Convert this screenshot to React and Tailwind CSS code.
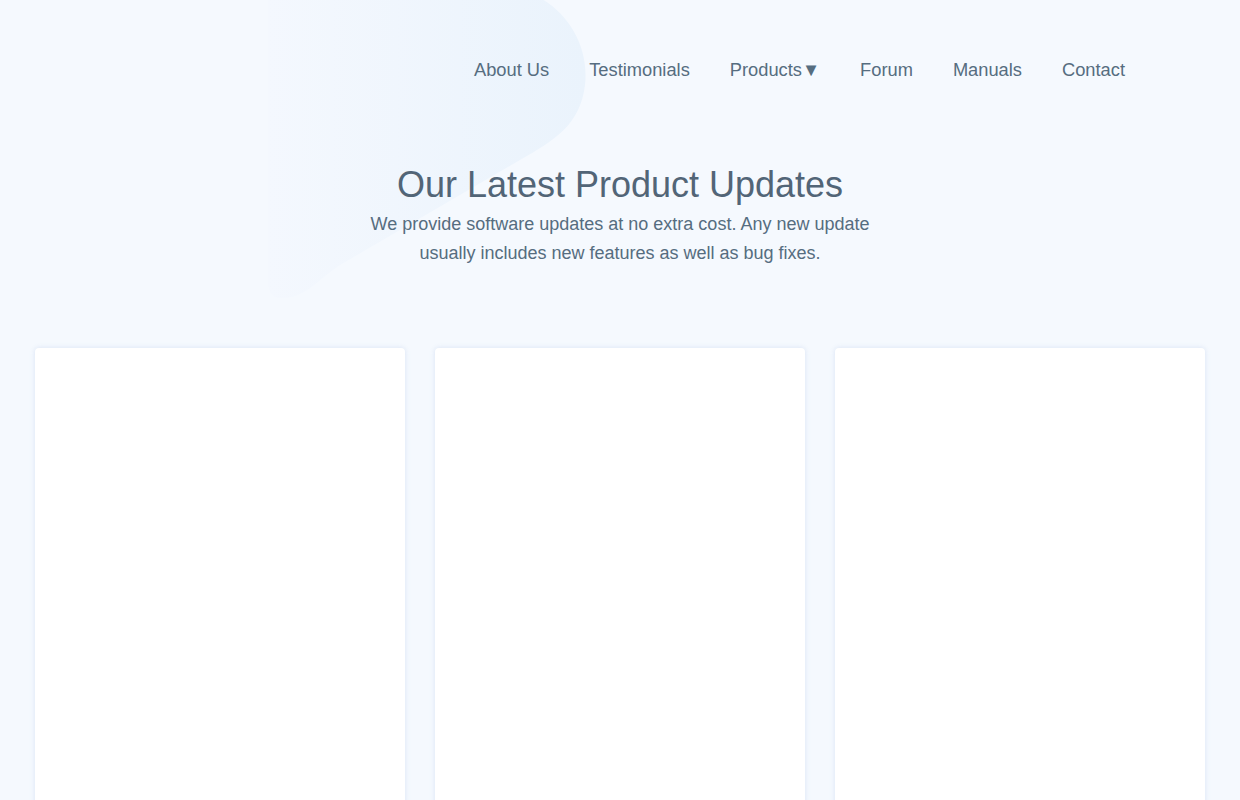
import React from "react";

const navItems = ["About Us", "Testimonials", "Products▼", "Forum", "Manuals", "Contact"];

const Blob = () => (
  <svg
    className="absolute left-0 top-0 pointer-events-none"
    width="620"
    height="320"
    viewBox="0 0 620 320"
  >
    <defs>
      <linearGradient id="blobFill" x1="0" y1="0" x2="1" y2="0">
        <stop offset="0" stopColor="#f4f8fe" />
        <stop offset="1" stopColor="#eaf3fc" />
      </linearGradient>
    </defs>
    <path
      d="M268 -10 L520 -10 C560 0 590 40 585 85 C580 125 555 140 520 160 L340 265 C315 282 305 298 282 298 C272 298 268 292 268 282 Z"
      fill="url(#blobFill)"
    />
  </svg>
);

const Card = () => (
  <div className="h-[520px] bg-white rounded-[4px] shadow-[0_0_5px_rgba(180,200,230,0.45)]" />
);

export default function App() {
  return (
    <div
      className="relative min-h-[800px] overflow-hidden bg-[#f5f9fe]"
      style={{ fontFamily: '"Liberation Sans", Arial, sans-serif' }}
    >
      <Blob />
      <div className="relative">
        <nav className="flex justify-end pt-[58px] pr-[95px]">
          {navItems.map((item) => (
            <a
              key={item}
              href="#"
              className="px-5 text-[18.3px] leading-[24px] text-[#566d80]"
            >
              {item}
            </a>
          ))}
        </nav>

        <header className="mt-[80px] text-center">
          <h1 className="text-[36px] leading-[46px] text-[#526577]">
            Our Latest Product Updates
          </h1>
          <p className="mx-auto mt-[2px] max-w-[520px] text-[18px] leading-[29px] text-[#566d80]">
            We provide software updates at no extra cost. Any new update usually includes new features as well as bug fixes.
          </p>
        </header>

        <section className="mt-[80px] grid grid-cols-3 gap-[30px] px-[35px]">
          <Card />
          <Card />
          <Card />
        </section>
      </div>
    </div>
  );
}
